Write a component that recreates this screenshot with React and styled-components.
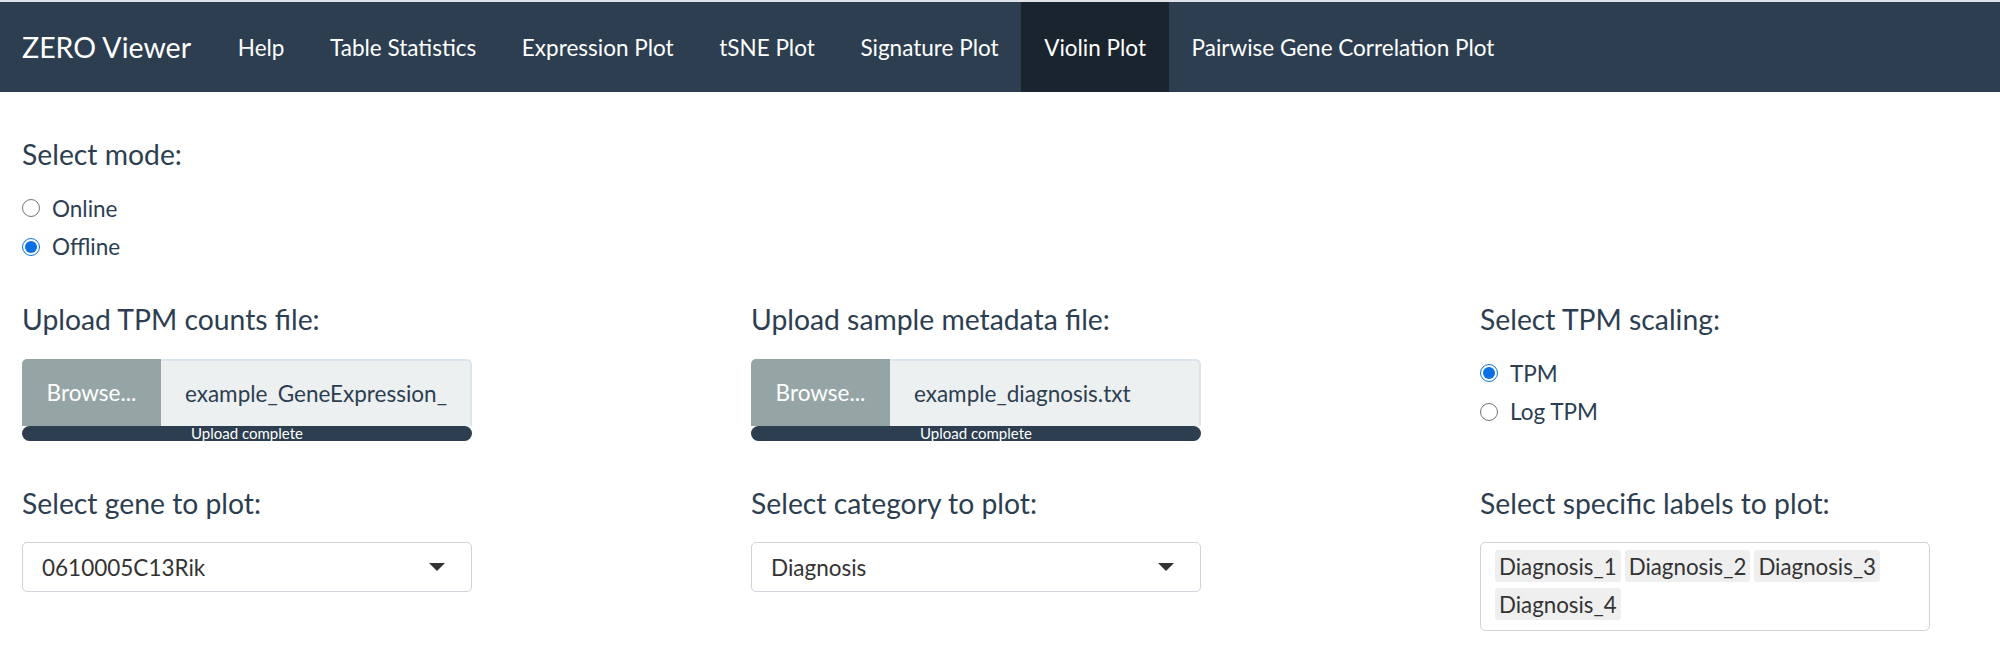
import React from 'react'
import styled, { createGlobalStyle, css } from 'styled-components'

const GlobalStyle = createGlobalStyle`
  html, body {
    margin: 0;
    padding: 0;
    background: #fff;
  }
  body {
    font-family: Lato, "Open Sans", "Liberation Sans", sans-serif;
    color: #2c3e50;
    border-top: 2px solid #dfe3e8;
  }
`

const navItems = [
    'Help',
    'Table Statistics',
    'Expression Plot',
    'tSNE Plot',
    'Signature Plot',
    'Violin Plot',
    'Pairwise Gene Correlation Plot',
]

export default function App() {
    return (
        <>
            <GlobalStyle />
            <NavBar>
                <Brand>ZERO Viewer</Brand>
                <NavList>
                    {navItems.map(item => (
                        <NavLink key={item} active={item === 'Violin Plot'}>{item}</NavLink>
                    ))}
                </NavList>
            </NavBar>
            <Content>
                <ModeBlock>
                    <Label>Select mode:</Label>
                    <RadioGroup>
                        <RadioRow><Radio /> Online</RadioRow>
                        <RadioRow><Radio checked /> Offline</RadioRow>
                    </RadioGroup>
                </ModeBlock>

                <Row>
                    <Column>
                        <Label>Upload TPM counts file:</Label>
                        <FileInput>
                            <Browse>Browse...</Browse>
                            <FileName>example_GeneExpression_</FileName>
                        </FileInput>
                        <Progress>Upload complete</Progress>
                    </Column>
                    <Column>
                        <Label>Upload sample metadata file:</Label>
                        <FileInput>
                            <Browse>Browse...</Browse>
                            <FileName>example_diagnosis.txt</FileName>
                        </FileInput>
                        <Progress>Upload complete</Progress>
                    </Column>
                    <Column>
                        <Label>Select TPM scaling:</Label>
                        <RadioGroup>
                            <RadioRow><Radio checked /> TPM</RadioRow>
                            <RadioRow><Radio /> Log TPM</RadioRow>
                        </RadioGroup>
                    </Column>
                </Row>

                <Row second>
                    <Column>
                        <Label>Select gene to plot:</Label>
                        <Select>
                            <span>0610005C13Rik</span>
                            <Caret />
                        </Select>
                    </Column>
                    <Column>
                        <Label>Select category to plot:</Label>
                        <Select>
                            <span>Diagnosis</span>
                            <Caret />
                        </Select>
                    </Column>
                    <Column>
                        <Label>Select specific labels to plot:</Label>
                        <MultiSelect>
                            {['Diagnosis_1', 'Diagnosis_2', 'Diagnosis_3', 'Diagnosis_4'].map(t => (
                                <Tag key={t}>{t}</Tag>
                            ))}
                        </MultiSelect>
                    </Column>
                </Row>
            </Content>
        </>
    )
}

const NavBar = styled.nav`
    height: 90px;
    background: #2c3e50;
    display: flex;
    align-items: stretch;
    padding-left: 22px;
`
const Brand = styled.div`
    font-size: 28.5px;
    color: #fff;
    display: flex;
    align-items: center;
    margin-right: 24px;
`
const NavList = styled.div`
    display: flex;
    align-items: stretch;
`
const NavLink = styled.div`
    display: flex;
    align-items: center;
    padding: 0 22.8px;
    font-size: 22.5px;
    color: #fff;
    ${p => p.active && css`
        background: #1a242f;
    `}
`

const Content = styled.div`
    padding: 0 22px;
`
const ModeBlock = styled.div`
    padding-top: 45px;
`
const Label = styled.div`
    font-size: 28.3px;
    line-height: 34px;
    color: #2c3e50;
    margin-bottom: 18px;
`
const RadioGroup = styled.div`
    display: flex;
    flex-direction: column;
`
const RadioRow = styled.label`
    display: flex;
    align-items: center;
    gap: 12px;
    height: 38.5px;
    font-size: 22.5px;
    color: #2c3e50;
`
const Radio = styled.span`
    width: 18px;
    height: 18px;
    border-radius: 50%;
    box-sizing: border-box;
    border: 1px solid ${p => p.checked ? '#0b74e5' : '#767676'};
    background: #fff;
    position: relative;
    ${p => p.checked && css`
        &::after {
            content: '';
            position: absolute;
            inset: 2px;
            border-radius: 50%;
            background: #0b6fe6;
        }
    `}
`

const Row = styled.div`
    display: grid;
    grid-template-columns: 729px 729px 1fr;
    margin-top: ${p => p.second ? '45px' : '36px'};
`
const Column = styled.div`
    display: flex;
    flex-direction: column;
`
const FileInput = styled.div`
    width: 450px;
    height: 67px;
    margin-top: 5px;
    display: flex;
    border-radius: 5px 5px 0 0;
    overflow: hidden;
`
const Browse = styled.div`
    width: 139px;
    background: #95a5a6;
    color: #fff;
    font-size: 22.5px;
    display: flex;
    align-items: center;
    justify-content: center;
`
const FileName = styled.div`
    flex: 1;
    background: #ecf0f1;
    border: 2px solid #dce4ec;
    border-left: none;
    border-bottom: none;
    border-radius: 0 5px 0 0;
    font-size: 22.5px;
    display: flex;
    align-items: center;
    padding-left: 24px;
    white-space: nowrap;
    overflow: hidden;
`
const Progress = styled.div`
    width: 450px;
    height: 15px;
    background: #2c3e50;
    border-radius: 8px;
    color: #fff;
    font-size: 15px;
    line-height: 15px;
    text-align: center;
`
const Select = styled.div`
    width: 450px;
    height: 50px;
    margin-top: 4px;
    box-sizing: border-box;
    border: 1px solid #ced4da;
    border-radius: 5px;
    display: flex;
    align-items: center;
    justify-content: space-between;
    padding: 0 26px 0 19px;
    font-size: 22.5px;
    color: #333;
`
const Caret = styled.span`
    width: 0;
    height: 0;
    border-left: 8px solid transparent;
    border-right: 8px solid transparent;
    border-top: 8px solid #333;
`
const MultiSelect = styled.div`
    width: 450px;
    min-height: 89px;
    margin-top: 4px;
    box-sizing: border-box;
    border: 1px solid #ced4da;
    border-radius: 5px;
    padding: 7px 14px;
    display: flex;
    flex-wrap: wrap;
    gap: 6px 4px;
    align-content: flex-start;
`
const Tag = styled.span`
    background: #efefef;
    border-radius: 3px;
    padding: 0 4px;
    height: 32px;
    display: flex;
    align-items: center;
    font-size: 22.3px;
    color: #333;
`
